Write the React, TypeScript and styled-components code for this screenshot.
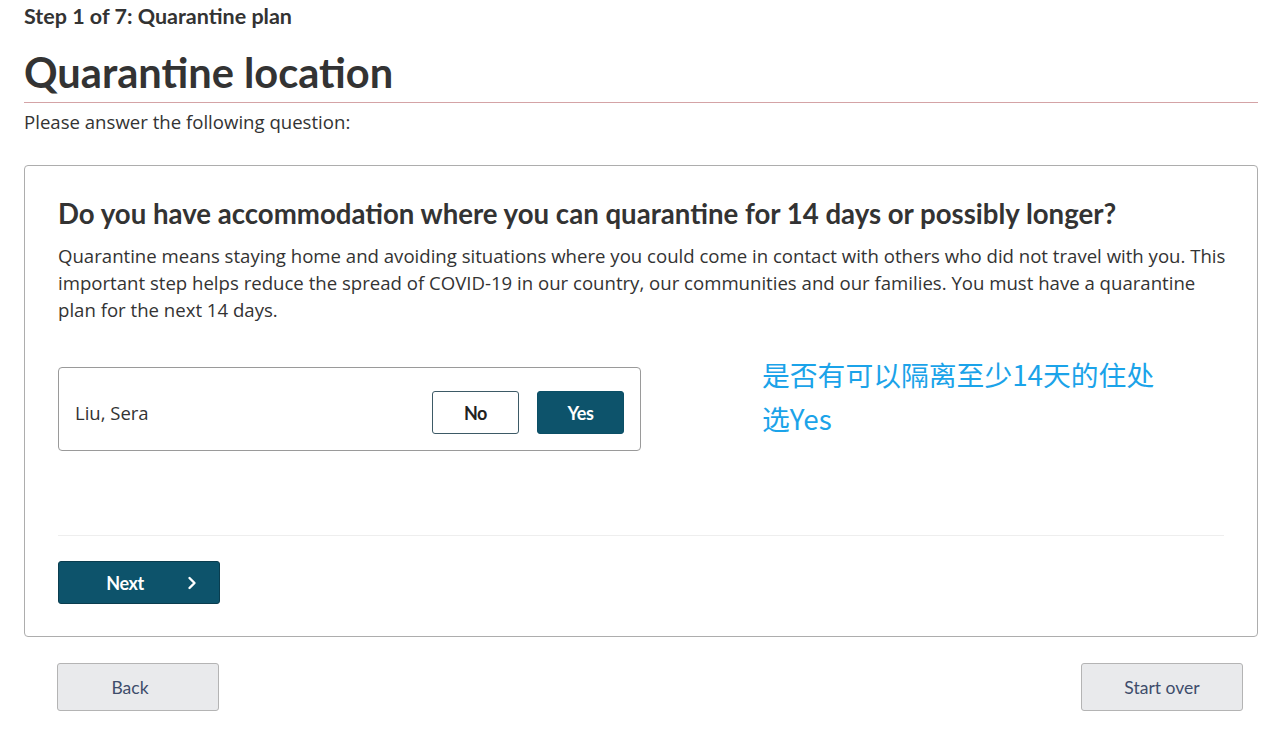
import React from "react";
import styled, { createGlobalStyle } from "styled-components";

const GlobalStyle = createGlobalStyle`
  html, body { margin: 0; padding: 0; background: #fff; }
  body { font-family: "Open Sans", "Noto Sans", sans-serif; color: #333; }
  * { box-sizing: border-box; }
`;

const Page = styled.div`
  padding: 0 22px 0 24px;
`;

const StepLabel = styled.div`
  font-family: Lato, sans-serif;
  font-weight: 700;
  font-size: 21.5px;
  line-height: 24px;
  color: #333;
  padding-top: 4px;
`;

const Title = styled.h1`
  font-family: Lato, sans-serif;
  font-weight: 700;
  font-size: 41.6px;
  line-height: 48px;
  color: #333;
  margin: 20px 0 0;
  padding-bottom: 6px;
  border-bottom: 1px solid #d4a3a6;
`;

const Intro = styled.p`
  font-size: 18.6px;
  line-height: 26px;
  margin: 6px 0 0;
  color: #333;
`;

const Card = styled.section`
  margin-top: 30px;
  border: 1px solid #adadad;
  border-radius: 4px;
  padding: 31px 30px 32px 33px;
`;

const Question = styled.h2`
  font-family: Lato, sans-serif;
  font-weight: 700;
  font-size: 27.6px;
  line-height: 34px;
  margin: 0;
  color: #333;
`;

const Explain = styled.p`
  font-size: 18.6px;
  line-height: 27px;
  margin: 11px 0 0;
  color: #333;
`;

const AnswerArea = styled.div`
  display: flex;
  align-items: flex-start;
  gap: 121px;
  margin: 0 3px 0 0;
  padding-top: 44px;
  height: 213px;
  border-bottom: 1px solid #eeeeee;
`;

const PersonRow = styled.div`
  width: 583px;
  height: 84px;
  border: 1px solid #9a9a9a;
  border-radius: 4px;
  display: flex;
  align-items: center;
  padding: 7px 16px 0 16px;
`;

const PersonName = styled.span`
  flex: 1;
  font-size: 18.5px;
  color: #333;
`;

const Choice = styled.button<{ $selected?: boolean }>`
  width: 87px;
  height: 43px;
  margin-left: 18px;
  border-radius: 3px;
  border: 1px solid ${(p) => (p.$selected ? "#0b4f66" : "#3d5a66")};
  background: ${(p) => (p.$selected ? "#0d536b" : "#fff")};
  color: ${(p) => (p.$selected ? "#fff" : "#222")};
  font-family: Lato, sans-serif;
  font-weight: 700;
  font-size: 18px;
  letter-spacing: -0.4px;
  cursor: pointer;
`;

const Note = styled.div`
  font-family: "Noto Sans CJK SC", "Noto Sans", sans-serif;
  font-size: 27.8px;
  line-height: 44px;
  color: #1ba3e9;
  margin-top: -15px;
`;

const NextButton = styled.button`
  margin-top: 25px;
  width: 162px;
  height: 43px;
  background: #0d536b;
  color: #fff;
  border: 1px solid #0a3d4f;
  border-radius: 3px;
  display: flex;
  align-items: center;
  justify-content: center;
  gap: 43px;
  padding-left: 31px;
  font-family: Lato, sans-serif;
  font-weight: 700;
  font-size: 18px;
  letter-spacing: -0.4px;
  cursor: pointer;
`;

const Footer = styled.div`
  display: flex;
  justify-content: space-between;
  padding: 26px 15px 0 33px;
`;

const NavButton = styled.button<{ $shiftLeft?: number }>`
  width: 162px;
  height: 48px;
  padding: 0 ${(p) => p.$shiftLeft ?? 0}px 0 0;
  background: #e9eaec;
  border: 1px solid #b4b4b4;
  border-radius: 3px;
  color: #3e4d6b;
  font-family: Lato, sans-serif;
  font-size: 17.5px;
  cursor: pointer;
`;

const Chevron = () => (
  <svg width="10" height="14" viewBox="0 0 10 14" fill="none">
    <path d="M2.5 2 L7.5 7 L2.5 12" stroke="#fff" strokeWidth="2.4" strokeLinecap="round" strokeLinejoin="round" />
  </svg>
);

export default function App() {
  return (
    <>
      <GlobalStyle />
      <Page>
        <StepLabel>Step 1 of 7: Quarantine plan</StepLabel>
        <Title>Quarantine location</Title>
        <Intro>Please answer the following question:</Intro>
        <Card>
          <Question>Do you have accommodation where you can quarantine for 14 days or possibly longer?</Question>
          <Explain>
            Quarantine means staying home and avoiding situations where you could come in contact with others who did not travel with you. This important step helps reduce the spread of COVID-19 in our country, our communities and our families. You must have a quarantine plan for the next 14 days.
          </Explain>
          <AnswerArea>
            <PersonRow>
              <PersonName>Liu, Sera</PersonName>
              <Choice>No</Choice>
              <Choice $selected>Yes</Choice>
            </PersonRow>
            <Note>
              是否有可以隔离至少14天的住处
              <br />
              选Yes
            </Note>
          </AnswerArea>
          <NextButton>
            <span>Next</span>
            <Chevron />
          </NextButton>
        </Card>
        <Footer>
          <NavButton $shiftLeft={16}>Back</NavButton>
          <NavButton>Start over</NavButton>
        </Footer>
      </Page>
    </>
  );
}
